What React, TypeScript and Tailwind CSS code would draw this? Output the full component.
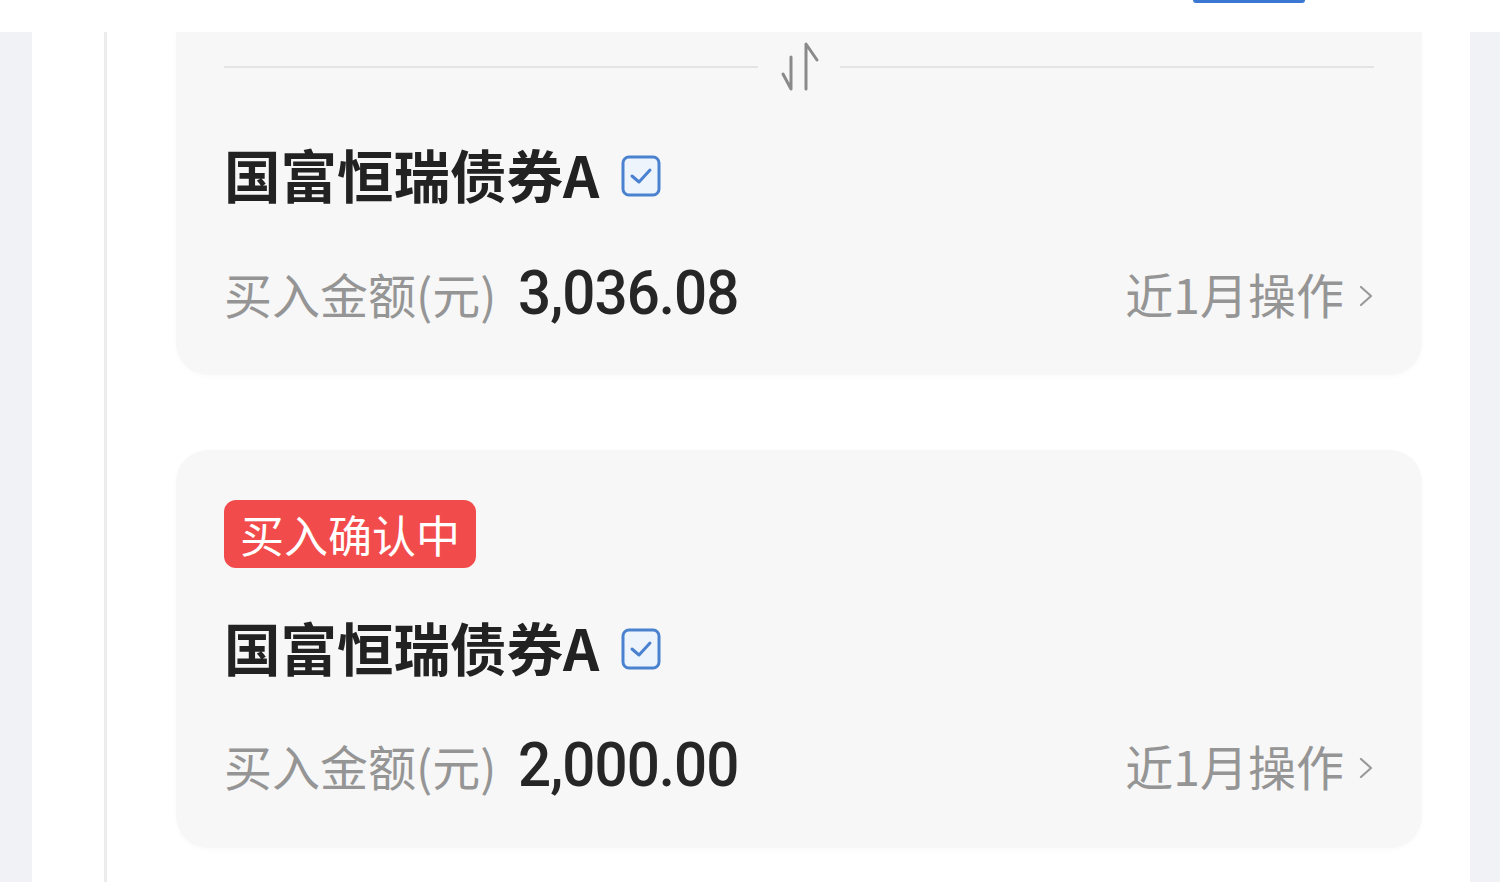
import React from "react";

const cjk = "font-['Noto_Sans_CJK_SC',sans-serif]";

const SwapIcon = () => (
  <svg width="40" height="50" viewBox="0 0 40 50" fill="none" stroke="#8a8a8a" strokeWidth="3" strokeLinecap="round" strokeLinejoin="round">
    <path d="M12 15 V47 L4 32" />
    <path d="M27 47 V2 L38 18" />
  </svg>
);

const CheckBadge = () => (
  <svg width="40" height="42" viewBox="0 0 40 42" fill="none">
    <rect x="2" y="2" width="36" height="38" rx="6" stroke="#4a82d0" strokeWidth="3" fill="#eef4fc" />
    <path d="M11 21 L18 27 L29 15" stroke="#4a82d0" strokeWidth="3" strokeLinecap="round" strokeLinejoin="round" />
  </svg>
);

const Chevron = () => (
  <svg width="16" height="26" viewBox="0 0 16 26" fill="none" stroke="#9a9a9a" strokeWidth="2.2" strokeLinecap="round" strokeLinejoin="round">
    <path d="M3 4 L13 13 L3 22" />
  </svg>
);

const FundTitle = ({ name }: { name: string }) => (
  <div className="flex items-center h-[60px]">
    <span className={`${cjk} text-[56.5px] leading-none font-semibold text-[#222222]`}>{name}</span>
    <span className="ml-[22px] mt-[6px]">
      <CheckBadge />
    </span>
  </div>
);

const AmountRow = ({ amount }: { amount: string }) => (
  <div className="flex items-center justify-between h-[60px]">
    <div className="flex items-baseline">
      <span className={`${cjk} text-[48px] leading-none text-[#959595]`}>买入金额(元)</span>
      <span className="ml-[22px] inline-block origin-left scale-x-[0.94] font-['Roboto',sans-serif] font-medium text-[62px] leading-none text-[#262626] tracking-[-1px]">
        {amount}
      </span>
    </div>
    <div className="flex items-center">
      <span className={`${cjk} text-[48px] leading-none text-[#959595]`}>近1月操作</span>
      <span className="ml-[14px] mt-[6px]">
        <Chevron />
      </span>
    </div>
  </div>
);

export default function App() {
  return (
    <div className="w-[1500px] h-[882px] bg-white overflow-hidden flex flex-col">
      {/* top bar */}
      <div className="h-[32px] bg-white flex">
        <div className="ml-[1193px] w-[112px] h-[3px] bg-[#3a78d4] rounded-b-[3px]" />
      </div>

      <div className="flex flex-1">
        <div className="w-[32px] bg-[#f1f2f6]" />

        <div className="flex-1 bg-white flex">
          <div className="w-[72px]" />
          <div className="w-[3px] bg-[#ececec]" />
          <div className="w-[69px]" />

          <div className="w-[1246px] flex flex-col">
            {/* card 1 */}
            <div className="bg-[#f7f7f7] rounded-b-[32px] px-[48px] pt-[10px] pb-[52px] shadow-[0_2px_6px_rgba(0,0,0,0.02)]">
              <div className="flex items-center h-[50px]">
                <div className="flex-1 h-[2px] bg-[#e4e4e4]" />
                <div className="w-[82px] flex justify-center">
                  <SwapIcon />
                </div>
                <div className="flex-1 h-[2px] bg-[#e4e4e4]" />
              </div>
              <div className="mt-[51px]">
                <FundTitle name="国富恒瑞债券A" />
              </div>
              <div className="mt-[60px]">
                <AmountRow amount="3,036.08" />
              </div>
            </div>

            {/* card 2 */}
            <div className="mt-[75px] bg-[#f7f7f7] rounded-[32px] px-[48px] pt-[50px] pb-[53px] shadow-[0_2px_6px_rgba(0,0,0,0.02)]">
              <div className="flex">
                <div className={`${cjk} h-[68px] w-[252px] bg-[#f24b4b] rounded-[12px] flex items-center justify-center text-white text-[44px] leading-none`}>
                  买入确认中
                </div>
              </div>
              <div className="mt-[48px]">
                <FundTitle name="国富恒瑞债券A" />
              </div>
              <div className="mt-[59px]">
                <AmountRow amount="2,000.00" />
              </div>
            </div>
          </div>

          <div className="flex-1" />
        </div>

        <div className="w-[30px] bg-[#f1f2f6]" />
      </div>
    </div>
  );
}
